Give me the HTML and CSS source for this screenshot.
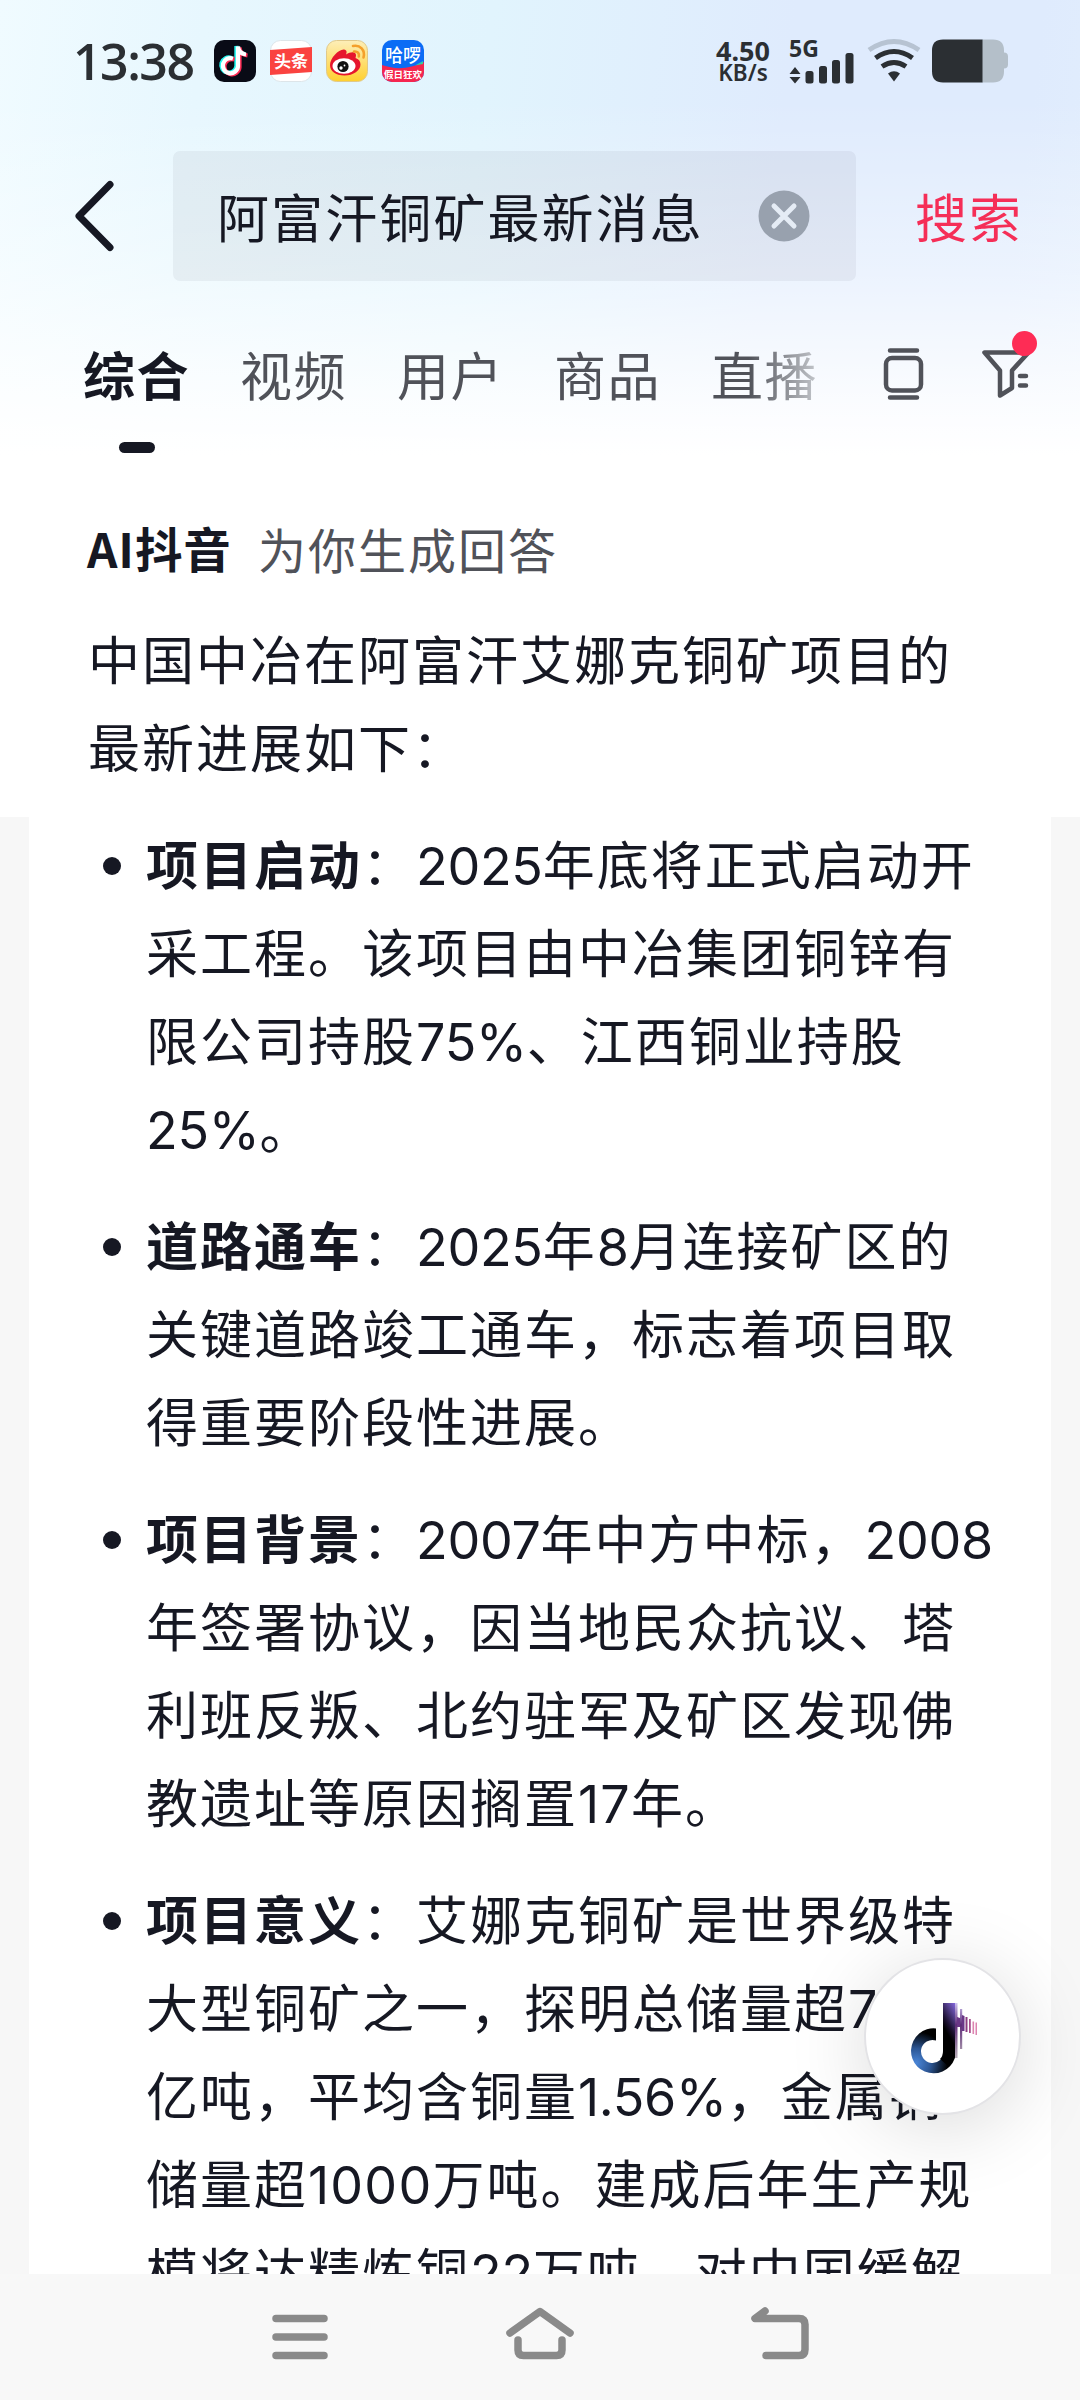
FILE: index.html
```html
<!doctype html>
<html lang="zh-CN">
<head>
  <meta charset="utf-8">
  <title>阿富汗铜矿最新消息</title>
  <link rel="stylesheet" href="styles.css">
</head>
<body>
  <div class="screen">
    <div class="status">
      <span class="time">13:38</span>
      <div class="apps">
        <svg class="app" viewBox="0 0 42 42">
          <rect width="42" height="42" rx="10" fill="#090b16"/>
          <g fill="none" stroke-width="4.2">
            <path d="M19 18.5a7.6 7.6 0 1 0 5 8V6.5c.5 4.500 3.500 7.500 8 8" stroke="#25f4ee" transform="translate(-1.600 -.6)"/>
            <path d="M19 18.5a7.6 7.6 0 1 0 5 8V6.5c.5 4.500 3.500 7.500 8 8" stroke="#fe2c55" transform="translate(1.500 1)"/>
            <path d="M19 18.5a7.6 7.6 0 1 0 5 8V6.5c.5 4.500 3.500 7.500 8 8" stroke="#fff"/>
          </g>
        </svg>
        <svg class="app" viewBox="0 0 42 42">
          <rect x=".5" y=".5" width="41" height="41" rx="10" fill="#fff" stroke="#dde5e9"/>
          <path d="M0 10 42 7v25L0 35z" fill="#fa4340"/>
          <text class="app-text" x="21" y="27.500" font-size="17" transform="rotate(-2 21 21)">头条</text>
        </svg>
        <svg class="app" viewBox="0 0 42 42">
          <defs>
            <linearGradient id="wb" x1="0" y1="0" x2="0" y2="1">
              <stop offset="0" stop-color="#fdeeb8"/>
              <stop offset="1" stop-color="#ffd02f"/>
            </linearGradient>
          </defs>
          <rect x=".5" y=".5" width="41" height="41" rx="10" fill="url(#wb)" stroke="#e0c98a"/>
          <path d="M4 25c0-7 9-16 14-15.500 3 .3 3 3 2 5 4-2.500 8-3 9.500-1 1 1.500.3 3 0 4.500 3 1 5 3 5 6.500 0 6-7 11-16 11S4 31 4 25z" fill="#e6162d"/>
          <ellipse cx="18" cy="26" rx="11.500" ry="7.800" fill="#fff"/>
          <circle cx="17" cy="26.500" r="5.600" fill="#111"/>
          <circle cx="15" cy="28" r="1.700" fill="#fff"/>
          <circle cx="18.500" cy="25.500" r=".9" fill="#fff"/>
          <path d="M27 6c7-1.500 12.500 4 10.500 11.500M28 11.500c3.500-.5 5.500 2 4.800 5" fill="none" stroke="#f4a02c" stroke-width="2.600" stroke-linecap="round"/>
        </svg>
        <svg class="app" viewBox="0 0 42 42">
          <defs><clipPath id="hl"><rect width="42" height="42" rx="10"/></clipPath></defs>
          <g clip-path="url(#hl)">
            <rect width="42" height="42" fill="#0b6cf5"/>
            <path d="M0 25c14 5 28 4 42-3v20H0z" fill="#f5264f"/>
            <path d="M33 25.500 41 21v3z" fill="#2fd1a0"/>
            <text class="app-text hello" x="21" y="21.500" font-size="18">哈啰</text>
            <text class="app-text" x="21" y="38" font-size="9.500">假日狂欢</text>
          </g>
        </svg>
      </div>
      <div class="speed"><span>4.50</span><span class="unit">KB/s</span></div>
      <div class="cell">
        <span class="net">5G</span>
        <svg class="signal" viewBox="0 0 66 32">
          <path d="M6 15l5.500 7H.5zM6 31.500.5 25h11z"/>
          <rect x="16.500" y="19" width="8" height="12.500" rx="2.500"/>
          <rect x="30" y="14" width="8" height="17.500" rx="2.500"/>
          <rect x="43" y="8" width="8" height="23.500" rx="2.500"/>
          <rect x="56.500" y="1" width="8" height="30.500" rx="2.500"/>
        </svg>
      </div>
      <svg class="wifi" viewBox="0 0 54 46" fill="none" stroke="#2b2f33" stroke-width="5">
        <path d="M2 12q25-17 50 0" stroke="#b7c3d2"/>
        <path d="M8.500 20q18.500-13 37 0"/>
        <path d="M15 28.500q12-8 24 0"/>
        <path d="M21 35.500q6-4.500 12 0l-6 8z" fill="#2b2f33" stroke="none"/>
      </svg>
      <svg class="battery" viewBox="0 0 76 44">
        <path d="M50 .5h11q11 0 11 11v2q4 0 4 4v8q0 4-4 4v3q0 11-11 11H50z" fill="#b4bfc9"/>
        <path d="M11 .5h39.500v43H11q-11 0-11-11v-21q0-11 11-11z" fill="#2b2f33"/>
      </svg>
    </div>

    <div class="search">
      <svg class="back" viewBox="0 0 42 72"><path d="M36 4.500 5 36l31 31.500"/></svg>
      <div class="field">
        <span class="query">阿富汗铜矿最新消息</span>
        <svg class="clear" viewBox="0 0 52 52">
          <circle cx="26" cy="26" r="25.500" fill="#98a1ae"/>
          <path d="m16 16 20 20m0-20L16 36" stroke="#e5ecf5" stroke-width="5" stroke-linecap="round"/>
        </svg>
      </div>
      <span class="go">搜索</span>
    </div>

    <div class="tabs">
      <span class="tab active">综合</span>
      <span class="tab">视频</span>
      <span class="tab">用户</span>
      <span class="tab">商品</span>
      <span class="tab fade">直播</span>
      <svg class="watch" viewBox="0 0 42 54">
        <path d="M7 3.500h27M7 50.500h27"/>
        <rect x="3" y="11" width="35" height="32.500" rx="6"/>
      </svg>
      <div class="filter">
        <svg viewBox="0 0 48 48">
          <path d="M2.500 2.500h44L30 20.500V38l-12 7.500v-25z"/>
          <path d="M38 26h6M38 35.500h6"/>
        </svg>
        <i class="dot"></i>
      </div>
    </div>

    <div class="results">
      <div class="card">
        <div class="ai"><b>AI抖音</b><span>为你生成回答</span></div>
        <p>中国中冶在阿富汗艾娜克铜矿项目的<br>最新进展如下：</p>
        <ul>
          <li><b>项目启动</b>：<i>2025</i>年底将正式启动开<br>采工程。该项目由中冶集团铜锌有<br>限公司持股<i>75%</i>、江西铜业持股<br><i>25%</i>。</li>
          <li><b>道路通车</b>：<i>2025</i>年<i>8</i>月连接矿区的<br>关键道路竣工通车，标志着项目取<br>得重要阶段性进展。</li>
          <li><b>项目背景</b>：<i>2007</i>年中方中标，<i>2008</i><br>年签署协议，因当地民众抗议、塔<br>利班反叛、北约驻军及矿区发现佛<br>教遗址等原因搁置<i class="wide">17</i>年。</li>
          <li><b>项目意义</b>：艾娜克铜矿是世界级特<br>大型铜矿之一，探明总储量超<i>7</i><br>亿吨，平均含铜量<i>1.56%</i>，金属铜<br>储量超<i class="wide">1000</i>万吨。建成后年生产规<br>模将达精炼铜<i>22</i>万吨，对中国缓解</li>
        </ul>
      </div>
      <div class="fab">
        <svg viewBox="0 0 70 74">
          <defs>
            <radialGradient id="ring" gradientUnits="userSpaceOnUse" cx="7" cy="62" r="42">
              <stop offset="0" stop-color="#4a86d8"/>
              <stop offset=".35" stop-color="#2c5694"/>
              <stop offset=".75" stop-color="#000"/>
            </radialGradient>
            <linearGradient id="stem" x1="1" y1="0" x2=".6" y2="1">
              <stop offset="0" stop-color="#8468dc"/>
              <stop offset=".45" stop-color="#1c1030"/>
              <stop offset=".6" stop-color="#000"/>
            </linearGradient>
            <linearGradient id="bar" x1="0" y1="0" x2="0" y2="1">
              <stop offset="0" stop-color="#cfc4f2"/>
              <stop offset=".4" stop-color="#5e2c78"/>
              <stop offset="1" stop-color="#b8aeb8"/>
            </linearGradient>
          </defs>
          <path d="M27 27.500v12a11.500 11.500 0 1 0 8 11l12-2A22.500 22.500 0 1 1 27 27.500z" fill="url(#ring)"/>
          <path d="M34 2h12v48q-1 10-8 14l-7-6q3-3 3-8z" fill="url(#stem)"/>
          <path d="M46 2h2.500v55H46zM51 8h2.200v40H51z" fill="url(#bar)"/>
          <path d="M48 16v10h3V17zM53 14v16h2.500V15z" fill="#6a3687"/>
          <path d="M56.500 16h2v15h-2z" fill="#8a3c80"/>
          <path d="M60 18h1.800v14H60z" fill="#a84f8e"/>
          <path d="M63.500 20.500h1.600V33h-1.600zM66.500 21.500H68V34h-1.500z" fill="#dc84b0"/>
        </svg>
      </div>
    </div>

    <div class="navbar">
      <svg viewBox="0 0 64 60"><path d="M8 17.500h48M8 36h48M8 54.500h48"/></svg>
      <svg viewBox="0 0 72 60"><path d="M6 32 36 10.500 66 32M14 39v10q0 5.500 5.500 5.500h33Q58 54.500 58 49V39"/></svg>
      <svg viewBox="0 0 64 60"><path d="M17 10 7 17.500h44q6 0 6 6v25q0 6-6 6H18"/></svg>
    </div>
  </div>
</body>
</html>
```

FILE: styles.css
```css
body {
  margin: 0;
  font-family: "Noto Sans CJK SC", sans-serif;
  color: #161823;
}
svg { display: block; flex: none; }
b { font-weight: 700; }

.screen {
  width: 1080px;
  height: 2400px;
  display: flex;
  flex-direction: column;
  overflow: hidden;
  background:
    linear-gradient(to bottom, rgba(255,255,255,0) 100px, rgba(255,255,255,.4) 270px, rgba(255,255,255,.85) 400px, #fff 455px),
    linear-gradient(97deg, #f0fbff 0, #e7f7fe 15%, #e1f4fd 36%, #dfebfd 58%, #dfebfd 76%, #e7f3fe 100%);
}

/* status bar */
.status {
  height: 122px;
  box-sizing: border-box;
  padding: 0 71px 0 73px;
  display: flex;
  align-items: center;
  color: #2b2f33;
}
.time {
  width: 141px;
  font: 600 50px/60px "Open Sans", sans-serif;
  letter-spacing: -1.500px;
  white-space: nowrap;
}
.apps { display: flex; gap: 14px; }
.app { width: 42px; height: 42px; }
.app-text {
  fill: #fff;
  font-weight: 700;
  text-anchor: middle;
}
.app-text.hello { font-weight: 500; }
.speed {
  width: 56px;
  margin-left: 291px;
  display: flex;
  flex-direction: column;
  align-items: center;
  font: 700 27px/24px "Noto Sans", sans-serif;
}
.speed .unit { font-size: 22.500px; font-weight: 600; line-height: 20px; }
.cell { width: 66px; margin-left: 18px; }
.net {
  display: block;
  height: 14px;
  font: 700 23px/20px "Noto Sans", sans-serif;
}
.signal { width: 66px; height: 32px; fill: #2b2f33; }
.wifi { width: 54px; height: 46px; margin-left: 12px; }
.battery { width: 76px; height: 44px; margin-left: 11px; }

/* search */
.search {
  height: 130px;
  margin-top: 29px;
  padding-left: 74px;
  display: flex;
  align-items: center;
}
.back { width: 42px; height: 72px; fill: none; stroke: #161823; stroke-width: 7; stroke-linecap: round; stroke-linejoin: round; }
.field {
  width: 683px;
  height: 130px;
  margin-left: 57px;
  box-sizing: border-box;
  padding: 0 46px 0 44px;
  display: flex;
  align-items: center;
  justify-content: space-between;
  border-radius: 7px;
  background: rgba(22,24,35,.05);
}
.query, .go { font-size: 52px; letter-spacing: 2.100px; line-height: 80px; padding-bottom: 1px; }
.clear { width: 52px; height: 52px; }
.go { margin-left: 59px; color: #f52e57; }

/* tabs */
.tabs {
  height: 174px;
  padding-left: 83px;
  display: flex;
}
.tab {
  margin-right: 50px;
  padding-top: 53px;
  font-size: 52px;
  line-height: 80px;
  letter-spacing: 1.500px;
  color: #505259;
  white-space: nowrap;
}
.active { color: #161823; font-weight: 700; }
.active::after {
  content: "";
  display: block;
  width: 36px;
  height: 11px;
  margin: 28px auto 0;
  border-radius: 6px;
  background: #161823;
}
.fade {
  background: linear-gradient(to right, #505259 35%, #c4c7cc 100%);
  -webkit-background-clip: text;
  background-clip: text;
  color: transparent;
}
.watch, .filter svg { fill: none; stroke: #505259; stroke-width: 4.500; stroke-linecap: round; stroke-linejoin: round; }
.watch { width: 42px; height: 54px; margin: 66px 0 0 15px; }
.filter { position: relative; margin: 69px 0 0 57px; }
.filter svg { width: 48px; height: 48px; }
.dot {
  position: absolute;
  top: -19px;
  left: 30px;
  width: 25px;
  height: 25px;
  border-radius: 50%;
  background: #fe2c55;
}

/* results */
.results {
  flex: 1;
  min-height: 0;
  position: relative;
  overflow: hidden;
  background: linear-gradient(to bottom, #fff 362px, #f7f7f7 362px);
}
.card {
  height: 100%;
  margin: 0 29px;
  box-sizing: border-box;
  padding: 53px 0 0 58px;
  background: #fff;
}
.ai {
  height: 80px;
  display: flex;
  align-items: center;
  line-height: 80px;
}
.ai b { font-size: 47.500px; width: 171px; white-space: nowrap; letter-spacing: .9px; }
.ai span { font-size: 48px; letter-spacing: 2px; color: #505259; }
p, ul {
  margin: 0;
  padding: 0;
  font-size: 52px;
  line-height: 88px;
  letter-spacing: 2px;
  white-space: nowrap;
}
p { margin-top: 26px; padding-left: 1px; }
li {
  position: relative;
  margin-top: 29px;
  padding-left: 59px;
  list-style: none;
}
li i {
  font: 400 52px/1 Inter, sans-serif;
  letter-spacing: -.3px;
}
li .wide { letter-spacing: 1.200px; }
li::before {
  content: "";
  position: absolute;
  left: 16px;
  top: 38px;
  width: 18px;
  height: 18px;
  border-radius: 50%;
  background: #161823;
}
.fab {
  position: absolute;
  left: 864px;
  top: 1503px;
  width: 153px;
  height: 153px;
  border: 2px solid #e3e3e6;
  border-radius: 50%;
  background: #fff;
  box-shadow: 0 12px 80px rgba(0,0,0,.15);
}
.fab svg { width: 70px; height: 74px; margin: 41px 0 0 43px; }

/* system navigation */
.navbar {
  height: 126px;
  padding: 0 268px;
  display: flex;
  justify-content: space-between;
  background: #f8f8f8;
}
.navbar svg { height: 60px; margin-top: 27px; fill: none; stroke: #8a8a8a; stroke-width: 7.500; stroke-linecap: round; stroke-linejoin: round; }
```
